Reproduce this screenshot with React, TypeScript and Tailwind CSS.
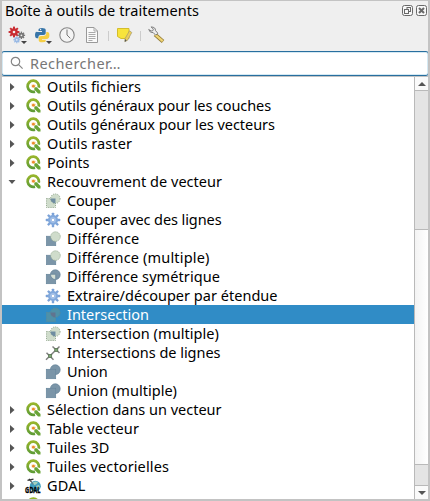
import React from "react";

type Kind = "clip" | "gear" | "diff" | "sym" | "inter" | "lines" | "union";
type Row = { t: string; w: number; icon: "q" | "gdal" | Kind; open?: boolean; child?: boolean; sel?: boolean };

const rows: Row[] = [
  { t: "Outils fichiers", w: 94, icon: "q" },
  { t: "Outils généraux pour les couches", w: 224, icon: "q" },
  { t: "Outils généraux pour les vecteurs", w: 228, icon: "q" },
  { t: "Outils raster", w: 85, icon: "q" },
  { t: "Points", w: 42.5, icon: "q" },
  { t: "Recouvrement de vecteur", w: 175, icon: "q", open: true },
  { t: "Couper", w: 49, icon: "clip", child: true },
  { t: "Couper avec des lignes", w: 154.5, icon: "gear", child: true },
  { t: "Différence", w: 72.5, icon: "diff", child: true },
  { t: "Différence (multiple)", w: 142.5, icon: "diff", child: true },
  { t: "Différence symétrique", w: 153, icon: "sym", child: true },
  { t: "Extraire/découper par étendue", w: 210.5, icon: "gear", child: true },
  { t: "Intersection", w: 82, icon: "inter", child: true, sel: true },
  { t: "Intersection (multiple)", w: 152, icon: "inter", child: true },
  { t: "Intersections de lignes", w: 153.5, icon: "lines", child: true },
  { t: "Union", w: 40.5, icon: "union", child: true },
  { t: "Union (multiple)", w: 110, icon: "union", child: true },
  { t: "Sélection dans un vecteur", w: 174.5, icon: "q" },
  { t: "Table vecteur", w: 92, icon: "q" },
  { t: "Tuiles 3D", w: 62.5, icon: "q" },
  { t: "Tuiles vectorielles", w: 122, icon: "q" },
  { t: "GDAL", w: 38.5, icon: "gdal" },
];

/* Label whose letter spacing is adjusted so that it spans the given width. */
function Label({ text, width, className }: { text: string; width: number; className: string }) {
  const ref = React.useRef<HTMLSpanElement>(null);
  const [spacing, setSpacing] = React.useState(0);
  React.useLayoutEffect(() => {
    const el = ref.current;
    if (el) setSpacing((width - el.getBoundingClientRect().width) / text.length);
  }, []);
  return (
    <span ref={ref} className={"whitespace-pre " + className} style={{ letterSpacing: spacing }}>
      {text}
    </span>
  );
}

function Gear({ cx, cy, r, fill, hole }: { cx: number; cy: number; r: number; fill: string; hole: string }) {
  return (
    <g transform={`translate(${cx} ${cy})`}>
      {[0, 45, 90, 135].map((a) => (
        <rect key={a} x={-r * 0.18} y={-r} width={r * 0.36} height={r * 2} fill={fill} transform={`rotate(${a})`} />
      ))}
      <circle r={r * 0.7} fill={fill} />
      <circle r={r * 0.24} fill={hole} />
    </g>
  );
}

function QLogo() {
  return (
    <svg width="15" height="15" viewBox="0 0 15 15">
      <defs>
        <linearGradient id="qg" x1="0" y1="0" x2="0" y2="1">
          <stop offset="0" stopColor="#97b52c" />
          <stop offset="1" stopColor="#5f9c35" />
        </linearGradient>
      </defs>
      <path d="M9 12.6A5.600 5.600 0 1 1 12.700 8.600" fill="none" stroke="url(#qg)" strokeWidth="2.700" />
      <path d="M8.300 8.300h2.500l3.700 3.700v2.500h-2.400L8.300 10.700z" fill="#69a436" />
      <path d="M5.400 5.400h3.600l1.200 1.200-2.200 2.300L5.400 8.200z" fill="#fbe3b2" />
      <circle cx="7.400" cy="7.200" r="1.400" fill="#ec8a2c" />
    </svg>
  );
}

function ToolIcon({ kind, sel }: { kind: Kind; sel?: boolean }) {
  const pale = sel ? "#4f91a8" : "#cfdccb";
  const edge = sel ? "#5d8b98" : "#8fa58b";
  const dark = "#7b95a8";
  const line = "#66849a";
  return (
    <svg width="16" height="16" viewBox="0 0 16 16">
      {kind === "gear" && (
        <g transform="translate(8 8)">
          {[0, 45, 90, 135].map((a) => (
            <rect key={a} x="-1.200" y="-7.300" width="2.400" height="14.600" rx=".6" fill="#7ba2d8" transform={`rotate(${a})`} />
          ))}
          <circle r="5" fill="#82a9dc" />
          <circle r="3.300" fill="#a9c6ec" stroke="#769dd2" strokeWidth=".5" />
          <circle r="1.700" fill="#fff" stroke="#769dd2" strokeWidth=".5" />
        </g>
      )}
      {(kind === "clip" || kind === "inter") && (
        <g>
          <rect x="1.500" y="5.500" width="9" height="9" fill={pale} stroke={edge} strokeDasharray="1 1.200" />
          <circle cx="10.300" cy="5.700" r="4.800" fill={pale} stroke={edge} strokeDasharray="1 1.200" />
          <path d="M5.500 5.500h5v5a4.800 4.800 0 0 1-5-5z" fill={sel ? "#60748f" : "#6f8da1"} />
        </g>
      )}
      {kind === "diff" && (
        <g>
          <rect x="1.300" y="5.200" width="9.500" height="9.500" fill={dark} stroke={line} strokeWidth=".6" />
          <circle cx="10.500" cy="5.600" r="4.800" fill="#cfdccb" stroke="#9aad96" strokeDasharray="1 1" />
        </g>
      )}
      {(kind === "sym" || kind === "union") && (
        <g fill={dark} stroke={line} strokeWidth=".7">
          <circle cx="10.300" cy="5.700" r="4.900" />
          <rect x="1.300" y="5.300" width="9.400" height="9.400" />
          {kind === "sym" ? (
            <path d="M5.500 5.300h5.200v5.200a5 5 0 0 1-5.200-5.200z" fill="#d5dfd5" />
          ) : (
            <path d="M5.800 5.700h4.500v4.500a4.800 4.800 0 0 1-4.500-4.500z" stroke="none" />
          )}
        </g>
      )}
      {kind === "lines" && (
        <g>
          <path d="M1.500 7.800l7 7M1 14.800L14.500 1.500M7.500 1.500l7 6.500" stroke="#808080" strokeWidth="1.500" fill="none" />
          <rect x="3.700" y="9.500" width="3" height="3" fill="#7ba574" stroke="#56704f" strokeWidth=".7" />
          <rect x="9.800" y="3.500" width="3" height="3" fill="#7ba574" stroke="#56704f" strokeWidth=".7" />
        </g>
      )}
    </svg>
  );
}

function Gdal() {
  return (
    <div className="relative h-4 w-[15px]">
      <svg width="15" height="16" viewBox="0 0 15 16">
        <circle cx="9.300" cy="8.200" r="5.500" fill="#3f9dbd" />
        <path d="M7 4l3-.5 2 1-2 2-2 .5zM10 8l3-1 1 2-2 2z" fill="#a7d1bf" />
        <path d="M1.500 2.300l6-1.200M3 .8l2.500 3" stroke="#333" strokeWidth="1.300" />
        <path d="M4.500 2.500l2.500 4" stroke="#777" />
      </svg>
      <span className="absolute -left-px top-[7px] origin-left scale-x-[.64] text-[9px] leading-[9px] font-bold text-black [-webkit-text-stroke:.3px_black]">
        GDAL
      </span>
    </div>
  );
}

function Toolbar() {
  return (
    <svg className="block" width="180" height="28" viewBox="2 22 180 28">
      <Gear cx={14} cy={32} r={5.4} fill="#c92c32" hole="#efefef" />
      <Gear cx={21.4} cy={35.3} r={3.7} fill="#777" hole="#efefef" />
      <Gear cx={16.8} cy={39.8} r={3.5} fill="#98b9e5" hole="#efefef" />
      <path d="M21 41h6l-3 3zM46 41h6l-3 3z" fill="#444" />
      <path d="M38.500 31v-1.300Q38.500 28 42 28t3.700 1.900v3.300Q45.700 35 43.500 35h-3Q38.300 35 38.300 38.200H37Q35 38.200 35 34.700T37.600 32H42v-1z" fill="#3875a8" />
      <path d="M46.300 32h1Q49.400 32 49.400 35.300T47 39h-5v.800h3.700v1.500Q45.500 42.300 42.300 42.300T38.700 40.400v-2.600Q38.700 35.900 41 35.900h2.700Q46.300 35.900 46.300 33.600z" fill="#f5ce45" />
      <circle cx="40.600" cy="29.600" r=".7" fill="#fff" />
      <circle cx="67" cy="35" r="7.200" fill="#f4f4f4" stroke="#858585" strokeWidth="1.100" />
      <path d="M67 29.500V35l3.300 3.300" fill="none" stroke="#777" />
      <path d="M86.500 27.500h7.500l3.500 3.500v11.500h-11z" fill="#fafafa" stroke="#999" />
      <path d="M94 27.500v3.500h3.500M88.500 32.500h7M88.500 34.500h7M88.500 36.500h7M88.500 38.500h7M88.500 40.500h4" fill="none" stroke="#aaa" />
      <path d="M108.500 31v10M140.500 31v10" stroke="#ccc" />
      <path d="M117.500 28.500h11.500v10h-8l-3.500-2z" fill="#f8e43b" stroke="#d4bd2c" />
      <path d="M129.500 30.800l-4.500 7.800-.2 3.100 2.800-1.500 4.200-7.700z" fill="#edce56" stroke="#a29a73" strokeWidth=".7" />
      <path d="M125 39l-.2 2.700 1.900-1z" fill="#555" />
      <path d="M155 34.500l8 7" stroke="#957d38" strokeWidth="3.800" />
      <path d="M155 34.500l7.700 6.700" stroke="#f0d574" strokeWidth="2.200" />
      <path d="M148.700 29.500q1 3.500 4.600 3.200l2.500 2.500 2-2-2.300-2.600q.2-3.500-4.400-3.700l2.300 2.300-.6 1.500-1.600.3z" fill="#eee" stroke="#737373" strokeWidth=".9" />
    </svg>
  );
}

export default function App() {
  return (
    <main className="flex h-[501px] w-[430px] flex-col overflow-hidden border-x-2 border-t border-b-2 border-[#c3c3c3] bg-[#efefef] font-['Noto_Sans','Open_Sans',sans-serif] text-[14.5px] text-black">
      <header className="flex h-[21px] shrink-0 items-center justify-between pl-[3px]">
        <Label text="Boîte à outils de traitements" width={194} className="-mt-[3px] leading-5" />
        <svg className="-mt-[2px]" width="27" height="13" viewBox="0 0 27 13" fill="none" stroke="#696969">
          <rect x="1.500" y="1.500" width="10" height="10" rx="2" fill="#f7f7f7" />
          <rect x="6" y="3.500" width="3.500" height="4" />
          <rect x="3.500" y="5.500" width="4" height="4" fill="#f7f7f7" />
          <rect x="15.500" y="1.500" width="10" height="10" rx="2" fill="#f7f7f7" />
          <path d="M18 4l5 5M23 4l-5 5" strokeWidth="2" />
        </svg>
      </header>
      <div className="h-7 shrink-0">
        <Toolbar />
      </div>
      <div className="-mx-px mt-px flex h-[25px] shrink-0 items-center rounded-[3px] border border-[#286f9f] bg-white pl-2 text-[#777] shadow-[inset_0_0_0_1px_#d5e9f3]">
        <svg className="-mt-px" width="14" height="14" viewBox="0 0 14 14" fill="none" stroke="#858585" strokeWidth="1.200">
          <circle cx="5.500" cy="5.500" r="4.200" />
          <path d="M8.600 8.600l4 4" />
        </svg>
        <Label text="Rechercher…" width={91} className="-mt-px ml-[6px] leading-5" />
      </div>
      <div className="flex min-h-0 flex-1 border-t border-[#c3c3c3] bg-white">
        <div className="min-w-0 flex-1 overflow-hidden">
          {rows.map((r) => (
            <div key={r.t} className={"flex h-[19px] items-center " + (r.sel ? "bg-[#308cc6] text-white" : "")}>
              <div className={"flex shrink-0 items-center " + (r.child ? "w-[43px]" : "w-[24px] pl-[6px]")}>
                {!r.child && (
                  <svg width="8" height="8" viewBox="0 0 8 8" fill="#555">
                    {r.open ? <path d="M.5 2h7L4 6z" /> : <path d="M2 0l4.500 4L2 8z" />}
                  </svg>
                )}
              </div>
              <div className={r.child ? "w-[22px] shrink-0" : "w-[21px] shrink-0"}>
                {r.icon === "q" ? <QLogo /> : r.icon === "gdal" ? <Gdal /> : <ToolIcon kind={r.icon} sel={r.sel} />}
              </div>
              <Label text={r.t} width={r.w} className="leading-[19px]" />
            </div>
          ))}
          <div className="flex h-[19px] pl-[24px] pt-[2px]">
            <QLogo />
          </div>
        </div>
        <div className="flex w-[14px] shrink-0 flex-col border-l border-[#b9b9b9] bg-[#e4e4e4]">
          <div className="flex h-[14px] items-center justify-center border-b border-[#b9b9b9] bg-[#fafafa]">
            <svg width="8" height="4" viewBox="0 0 8 4"><path d="M0 4l4-4 4 4z" fill="#555" /></svg>
          </div>
          <div className="h-[138px]" />
          <div className="h-[236px] border-y border-[#b9b9b9] bg-gradient-to-r from-[#f3f3f3] to-white" />
          <div className="flex-1" />
          <div className="flex h-[14px] items-center justify-center border-t border-[#b9b9b9] bg-[#fafafa]">
            <svg width="8" height="4" viewBox="0 0 8 4"><path d="M0 0l4 4 4-4z" fill="#555" /></svg>
          </div>
        </div>
      </div>
    </main>
  );
}
